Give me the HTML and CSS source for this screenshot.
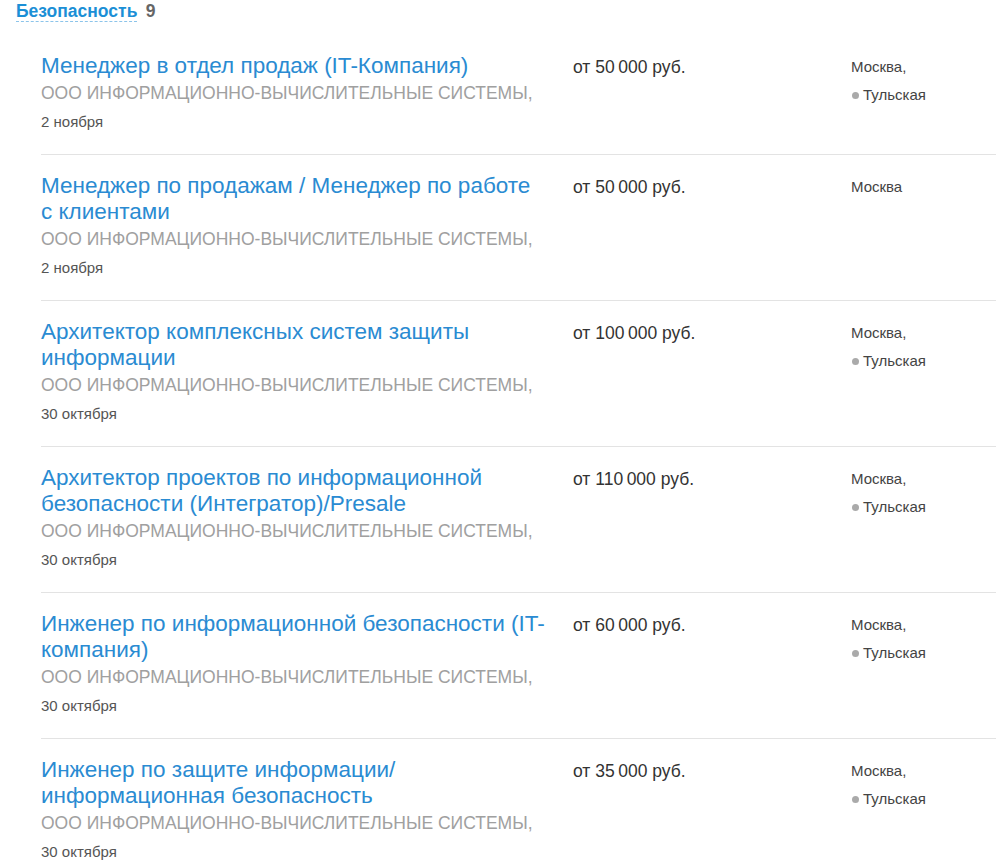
FILE: index.html
```html
<!DOCTYPE html>
<html lang="ru">
  <head>
    <meta charset="UTF-8" />
    <title>Вакансии</title>
    <link rel="stylesheet" href="styles.css">
  </head>
  <body>
    <div class="group">
      <div class="group-head">
        <span class="group-name">Безопасность</span>
        <span class="group-count">9</span>
      </div>

      <div class="vacancies">
        <div class="vacancy">
          <div class="info">
            <a class="title" href="#">Менеджер в отдел продаж (IT-Компания)</a>
            <div class="company">ООО ИНФОРМАЦИОННО-ВЫЧИСЛИТЕЛЬНЫЕ СИСТЕМЫ,</div>
            <div class="date">2 ноября</div>
          </div>
          <div class="salary">от 50&#8201;000 руб.</div>
          <div class="place">
            <div class="city">Москва,</div>
            <div class="metro">Тульская</div>
          </div>
        </div>

        <div class="vacancy">
          <div class="info">
            <a class="title" href="#">Менеджер по продажам / Менеджер по работе с&nbsp;клиентами</a>
            <div class="company">ООО ИНФОРМАЦИОННО-ВЫЧИСЛИТЕЛЬНЫЕ СИСТЕМЫ,</div>
            <div class="date">2 ноября</div>
          </div>
          <div class="salary">от 50&#8201;000 руб.</div>
          <div class="place">
            <div class="city">Москва</div>
          </div>
        </div>

        <div class="vacancy">
          <div class="info">
            <a class="title" href="#">Архитектор комплексных систем защиты информации</a>
            <div class="company">ООО ИНФОРМАЦИОННО-ВЫЧИСЛИТЕЛЬНЫЕ СИСТЕМЫ,</div>
            <div class="date">30 октября</div>
          </div>
          <div class="salary">от 100&#8201;000 руб.</div>
          <div class="place">
            <div class="city">Москва,</div>
            <div class="metro">Тульская</div>
          </div>
        </div>

        <div class="vacancy">
          <div class="info">
            <a class="title" href="#">Архитектор проектов по информационной безопасности (Интегратор)/Presale</a>
            <div class="company">ООО ИНФОРМАЦИОННО-ВЫЧИСЛИТЕЛЬНЫЕ СИСТЕМЫ,</div>
            <div class="date">30 октября</div>
          </div>
          <div class="salary">от 110&#8201;000 руб.</div>
          <div class="place">
            <div class="city">Москва,</div>
            <div class="metro">Тульская</div>
          </div>
        </div>

        <div class="vacancy">
          <div class="info">
            <a class="title" href="#">Инженер по информационной безопасности (IT-компания)</a>
            <div class="company">ООО ИНФОРМАЦИОННО-ВЫЧИСЛИТЕЛЬНЫЕ СИСТЕМЫ,</div>
            <div class="date">30 октября</div>
          </div>
          <div class="salary">от 60&#8201;000 руб.</div>
          <div class="place">
            <div class="city">Москва,</div>
            <div class="metro">Тульская</div>
          </div>
        </div>

        <div class="vacancy">
          <div class="info">
            <a class="title" href="#">Инженер по защите информации/ информационная безопасность</a>
            <div class="company">ООО ИНФОРМАЦИОННО-ВЫЧИСЛИТЕЛЬНЫЕ СИСТЕМЫ,</div>
            <div class="date">30 октября</div>
          </div>
          <div class="salary">от 35&#8201;000 руб.</div>
          <div class="place">
            <div class="city">Москва,</div>
            <div class="metro">Тульская</div>
          </div>
        </div>
      </div>
    </div>
  </body>
</html>
```

FILE: styles.css
```css
body,
html {
  margin: 0;
  padding: 0;
  background: #fff;
  font-family: "Liberation Sans", Arial, sans-serif;
  overflow: hidden;
}
.group-head {
  padding: 1px 0 0 16px;
  height: 34px;
  line-height: 20px;
}
.group-name {
  color: #1b8fd6;
  font-size: 17.5px;
  font-weight: bold;
  border-bottom: 1px dashed #8cc4ea;
}
.group-count {
  color: #666;
  font-size: 17.5px;
  font-weight: bold;
  margin-left: 4px;
}
.vacancies {
  margin-left: 41px;
}
.vacancy {
  display: grid;
  grid-template-columns: 532px 278px 1fr;
  padding: 18px 0 19px;
  border-bottom: 1px solid #e3e3e3;
}
.vacancy:last-child {
  border-bottom: none;
}
.info {
  padding-right: 25px;
}
.title {
  display: block;
  color: #2a8bd2;
  font-size: 22.5px;
  line-height: 26px;
  text-decoration: none;
}
.company {
  color: #a0a0a0;
  font-size: 17.5px;
  line-height: 29px;
}
.date {
  color: #555;
  font-size: 15px;
  line-height: 27px;
}
.salary {
  color: #333;
  font-size: 17.5px;
  line-height: 28px;
}
.city {
  color: #444;
  font-size: 15px;
  line-height: 26px;
  padding-top: 1px;
}
.metro {
  color: #444;
  font-size: 15px;
  line-height: 30px;
}
.metro::before {
  content: "";
  display: inline-block;
  width: 7px;
  height: 7px;
  border-radius: 50%;
  background: #aaa;
  margin: 0 4px 2px 1px;
  vertical-align: middle;
}
```
